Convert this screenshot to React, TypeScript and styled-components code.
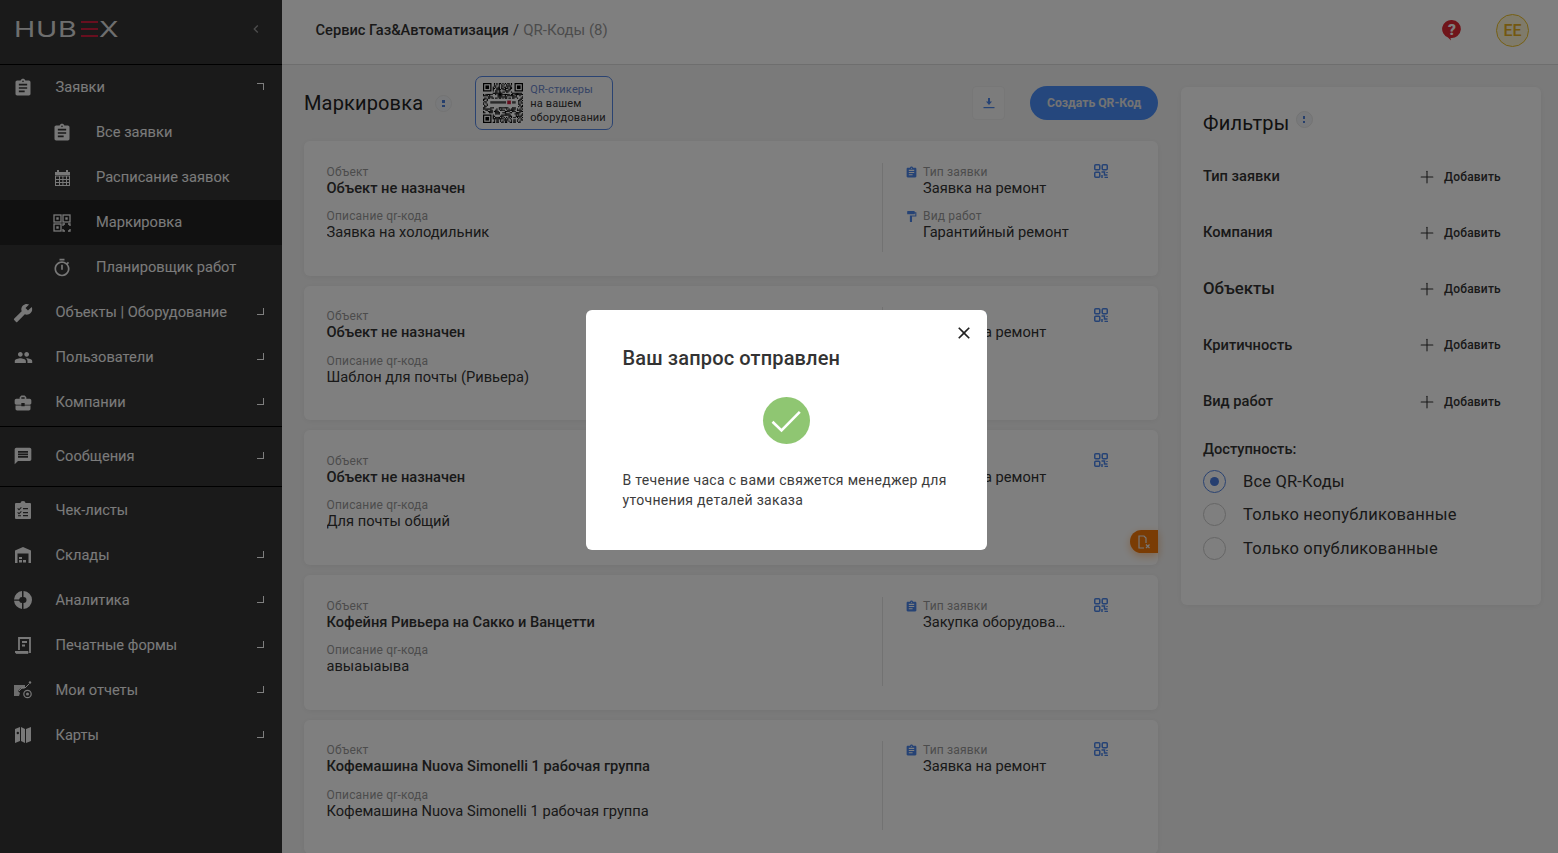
import React from "react";
import styled, { createGlobalStyle } from "styled-components";
import {
  MdAssignment, MdBuild, MdPeople, MdBusinessCenter, MdMessage,
  MdOutlineTimer, MdFormatPaint, MdClose, MdChevronLeft,
} from "react-icons/md";
import { Plus } from "lucide-react";

const Global = createGlobalStyle`
  html, body { margin: 0; padding: 0; height: 100%; overflow: hidden; background: #f4f4f4; }
  #root { height: 100%; }
  * { box-sizing: border-box; }
  body { font-family: Roboto, "Noto Sans", sans-serif; color: #333; }
`;

const Shell = styled.div`display: flex; height: 853px; overflow: hidden; background: #f5f5f5;`;
const Sidebar = styled.aside`width: 282px; flex: none; background: #343434; color: #fff;`;
const LogoBar = styled.div`
  height: 65px; display: flex; align-items: center; justify-content: space-between;
  padding: 0 18px 7px 14px; border-bottom: 1px solid #000;
`;
const Logo = styled.div`
  display: flex; align-items: center; color: #ddd; font-family: Inter, sans-serif;
  font-weight: 400; font-size: 22px; line-height: 20px;
`;
const LogoLetter = styled.span`display: block; width: 22px; transform: scaleX(1.3); transform-origin: left center;`;
const LogoE = styled.span`
  display: block; width: 17px; height: 16px; margin: 0 1px;
  background: repeating-linear-gradient(to bottom, #d11f3f 0 2.4px, transparent 2.4px 6.8px);
`;
const Collapse = styled.span`display: flex; color: #999;`;
const Item = styled.div<{ $sub?: boolean; $active?: boolean; $lift?: boolean }>`
  height: 45px; display: flex; align-items: center;
  padding-left: ${(p) => (p.$sub ? "53px" : "14px")};
  padding-bottom: ${(p) => (p.$lift ? "2px" : "0")};
  background: ${(p) => (p.$active ? "#222" : "transparent")};
  font-size: 14.65px; color: #f6f6f6;
`;
const IconBox = styled.span<{ $sub?: boolean; $lift?: boolean }>`
  width: 18px; height: 18px; flex: none; display: flex; align-items: center; justify-content: center;
  margin-right: ${(p) => (p.$sub ? "25px" : "23.5px")}; margin-top: ${(p) => (p.$lift ? "2px" : "0")}; color: #f0f0f0;
  svg { display: block; flex: none; }
`;
const Corner = styled.span<{ $open?: boolean }>`
  margin-left: auto; margin-right: 18px; width: 7px; height: 7px;
  border-right: 1px solid #fff;
  ${(p) => (p.$open ? "border-top: 1px solid #fff;" : "border-bottom: 1px solid #fff;")}
`;
const Section = styled.div<{ $pad?: boolean }>`
  padding: ${(p) => (p.$pad ? "6px 0 8px" : "0 0 1px")};
  border-bottom: 1px solid #000;
`;

const Main = styled.main`flex: 1; min-width: 0; display: flex; flex-direction: column;`;
const Header = styled.header`
  height: 65px; flex: none; background: #fff; border-bottom: 1px solid #dcdcdc;
  display: flex; align-items: center; padding: 0 29px 4px 33.5px;
`;
const Crumb = styled.div`font-size: 14.65px; font-weight: 500; color: #333;`;
const CrumbSlash = styled.span`font-weight: 400; color: #555; padding: 0 0.5px;`;
const CrumbMuted = styled.span`color: #999; font-weight: 400; font-size: 15px;`;
const HeaderRight = styled.div`margin-left: auto; display: flex; align-items: center; gap: 34px;`;
const Avatar = styled.div`
  width: 33px; height: 33px; border-radius: 50%; border: 1px solid #ecc028; background: #fff6d6;
  color: #e8b01c; font-size: 16px; font-weight: 500; display: flex; align-items: center; justify-content: center;
`;
const Content = styled.div`flex: 1; min-height: 0; display: flex; gap: 23px; padding: 11px 17px 0 22px;`;
const Left = styled.div`width: 854px; flex: none;`;
const TitleRow = styled.div`height: 54px; margin-bottom: 11px; display: flex; align-items: center;`;
const PageTitle = styled.h1`margin: 0; font-size: 20px; font-weight: 400; letter-spacing: 0.15px; color: #222;`;
const Info = styled.span`
  width: 17px; height: 17px; border-radius: 50%; background: #f1f3f7; border: 1px solid #e6e6e6;
  display: flex; align-items: center; justify-content: center; flex: none;
`;
const InfoDots = styled.span`
  width: 2.4px; height: 7px;
  background: linear-gradient(to bottom, #4d7fd8 0 2.5px, transparent 2.5px 4.5px, #4d7fd8 4.5px 7px);
`;
const TitleInfo = styled(Info)`margin-left: 12px;`;
const Promo = styled.div`
  margin-left: 23px; width: 138px; height: 54px; border: 1px solid #5586e4; border-radius: 7px;
  display: flex; align-items: center; padding-left: 7px; gap: 7px; background: #fafafa;
`;
const PromoText = styled.div`font-size: 11px; line-height: 14px; padding-top: 2px; color: #333; letter-spacing: 0.15px; white-space: nowrap;`;
const PromoAccent = styled.div`color: #6c88cc;`;
const Actions = styled.div`margin-left: auto; display: flex; align-items: center; gap: 25px;`;
const Download = styled.button`
  width: 33px; height: 34px; padding: 0; background: #f8f8f8; border: 1px solid #eee; border-radius: 4px;
  display: flex; align-items: center; justify-content: center; color: #4d86ea;
`;
const Create = styled.button`
  width: 128px; height: 34px; border: 0; border-radius: 17px; background: #4a8ffb; color: #e6e6e6;
  font-family: inherit; font-size: 12.2px; font-weight: 700; padding: 0;
`;
const Cards = styled.div`display: flex; flex-direction: column; gap: 10.03px;`;
const Card = styled.article`
  position: relative; height: 134.67px; flex: none; background: #fff; border-radius: 6px;
  box-shadow: 0 1px 6px rgba(0,0,0,.06); padding: 21.8px 50px 0 22.5px; display: flex;
`;
const CardLeft = styled.div`flex: 1; min-width: 0;`;
const CardRight = styled.div`
  width: 226px; height: 89px; flex: none; border-left: 1px solid #e4e4e4; padding-left: 22px;
  display: flex; justify-content: space-between;
`;
const Field = styled.div`height: 44.2px; display: flex; flex-direction: column;`;
const FieldLabel = styled.div`font-size: 12px; line-height: 15px; padding-top: 2px; height: 17px; color: #999; letter-spacing: 0.18px;`;
const FieldStrong = styled.div`font-size: 14.65px; line-height: 16.5px; font-weight: 500; color: #333;`;
const FieldValue = styled.div`font-size: 14.65px; line-height: 17px; color: #333; white-space: nowrap; overflow: hidden; text-overflow: ellipsis;`;
const Meta = styled.div`width: 166px; display: flex; flex-direction: column;`;
const MetaRow = styled.div`height: 44.2px; display: flex;`;
const MetaIcon = styled.span`width: 18px; flex: none; padding-top: 3px; color: #4d86ea; svg { display: block; }`;
const MetaBody = styled.div`width: 147px;`;
const QrBox = styled.span`color: #4d86ea; padding-top: 1px; svg { display: block; }`;
const Tab = styled.div`
  position: absolute; right: 0; top: 100px; width: 28px; height: 23px; background: #f57808;
  border-radius: 12px 0 0 12px; display: flex; align-items: center; justify-content: center;
  box-shadow: 0 3px 8px rgba(250,124,10,.4);
`;
const Filters = styled.section`
  width: 360px; height: 518px; flex: none; margin-top: 11px; background: #fff; border-radius: 6px;
  box-shadow: 0 1px 6px rgba(0,0,0,.06); padding: 22px 40px 0 22px;
`;
const FilterTitleRow = styled.div`height: 28px; margin-bottom: 11px; display: flex;`;
const FilterTitle = styled.h2`margin: 0; font-size: 20px; line-height: 28px; font-weight: 400; letter-spacing: .2px; color: #222;`;
const FilterInfo = styled(Info)`margin: 2px 0 0 6px;`;
const FilterRow = styled.div`height: 56.25px; display: flex; align-items: center; justify-content: space-between;`;
const FilterName = styled.div<{ $large?: boolean }>`
  font-size: ${(p) => (p.$large ? "16.8px" : "14.65px")}; font-weight: 500; color: #333;
  padding-bottom: ${(p) => (p.$large ? "2px" : "0")};
`;
const Add = styled.div`
  width: 80px; display: flex; align-items: center; font-size: 12px; font-weight: 500; color: #333;
  letter-spacing: .2px; gap: 7px; padding-top: 1px;
  svg { margin-left: -4px; flex: none; }
`;
const AvailLabel = styled.div`height: 20px; line-height: 20px; margin: 9.5px 0 5.5px; font-size: 14.65px; font-weight: 500; color: #333;`;
const RadioRow = styled.div`height: 33.5px; display: flex; align-items: center; gap: 17px; font-size: 16.5px; letter-spacing: .18px; color: #333;`;
const Radio = styled.span<{ $on?: boolean }>`
  width: 23px; height: 23px; border-radius: 50%; flex: none; display: flex; align-items: center; justify-content: center;
  border: 1px solid ${(p) => (p.$on ? "#5586e4" : "#ccc")};
  &::after { content: ""; width: 9px; height: 9px; border-radius: 50%; background: ${(p) => (p.$on ? "#4d7fe0" : "transparent")}; }
`;
const Overlay = styled.div`
  position: fixed; inset: 0; background: rgba(0,0,0,.5); display: flex; align-items: center; justify-content: center;
  padding-left: 15px; padding-top: 7px;
`;
const Modal = styled.div`
  position: relative; width: 401px; height: 240px; background: #fff; border-radius: 6px; padding: 36px 36px 0 36.5px;
`;
const ModalClose = styled.span`position: absolute; top: 13px; right: 13px; display: flex; color: #222;`;
const ModalTitle = styled.h3`margin: 0; font-size: 20px; line-height: 25px; font-weight: 500; letter-spacing: .15px; color: #333;`;
const Success = styled.div`
  width: 47px; height: 47px; margin: 26px auto 26px; border-radius: 50%; background: #8fc672;
  position: relative; left: -0.5px; svg { display: block; }
`;
const ModalText = styled.p`margin: 0; font-size: 14px; line-height: 20px; letter-spacing: .31px; color: #3c3c3c;`;

const Qr = ({ size = 18 }: { size?: number }) => (
  <svg width={size} height={size} viewBox="0 0 18 18" fill="none" stroke="currentColor">
    <rect x="1" y="1" width="7" height="7" strokeWidth="1.3" />
    <rect x="10" y="1" width="7" height="7" strokeWidth="1.3" />
    <rect x="1" y="10" width="7" height="7" strokeWidth="1.3" />
    <rect x="3.300" y="3.300" width="2.400" height="2.400" fill="currentColor" stroke="none" />
    <rect x="12.300" y="3.300" width="2.400" height="2.400" fill="currentColor" stroke="none" />
    <rect x="3.300" y="12.300" width="2.400" height="2.400" fill="currentColor" stroke="none" />
    <path d="M10 12v-2h2M15 10h2v2M17 15v2h-2M12 17h-2v-2" strokeWidth="1.300" />
  </svg>
);
const CardQr = () => (
  <svg width="14" height="14" viewBox="0 0 14 14" fill="none" stroke="currentColor" strokeWidth="1.500">
    <rect x=".75" y=".75" width="5" height="5" rx="1" />
    <rect x="8.250" y=".75" width="5" height="5" rx="1" />
    <rect x=".75" y="8.250" width="5" height="5" rx="1" />
    <path d="M7.500 8h3v3h3M8 11v3M10.500 13.500H14M13 8v1" />
  </svg>
);
const DownloadIcon = () => (
  <svg width="14" height="14" viewBox="0 0 14 14" fill="currentColor">
    <path d="M6 2h2v3.500h2L7 9 4 5.500h2z" />
    <rect x="1.500" y="11" width="11" height="1.200" />
  </svg>
);
const Calendar = () => (
  <svg width="17" height="18" viewBox="0 0 17 18" fill="currentColor">
    <path d="M3 1h2v2.500H3zM12 1h2v2.500h-2z" />
    <path d="M1 3h15v3H1z" />
    <path fillRule="evenodd" d="M1 6.600h15V17H1zM2 7.600V10h3V7.600zM6 7.600V10h2.400V7.600zM9.400 7.600V10H12V7.600zM13 7.600V10h2V7.600zM2 11v2h3v-2zM6 11v2h2.400v-2zM9.400 11v2H12v-2zM13 11v2h2v-2zM2 14v2h3v-2zM6 14v2h2.400v-2zM9.400 14v2H12v-2zM13 14v2h2v-2z" />
  </svg>
);
const Checklist = () => (
  <svg width="16" height="18" viewBox="0 0 16 18" fill="currentColor">
    <path fillRule="evenodd" d="M5.500 2a2.500 2 0 0 1 5 0H15a1 1 0 0 1 1 1v14a1 1 0 0 1-1 1H1a1 1 0 0 1-1-1V3a1 1 0 0 1 1-1zM3 7l1 1 2-2 .7.7L4 9.400 2.300 7.700zM8 7h5v1.200H8zM3 11l1 1 2-2 .7.7L4 13.400l-1.700-1.700zM8 11h5v1.200H8zM8 14h5v1.200H8zM3 14.200h3v1H3z" />
  </svg>
);
const Warehouse = () => (
  <svg width="16" height="18" viewBox="0 0 16 18" fill="currentColor">
    <path d="M0 4.500 8 1l8 3.500V17h-2.500V7.500h-11V17H0z" />
    <path d="M4 11h3v2H4zM4 14h3v2.500H4zM8 14h3v2.500H8z" />
  </svg>
);
const Pie = () => (
  <svg width="18" height="18" viewBox="0 0 18 18" fill="currentColor">
    <path d="M8 .1V6a3 3 0 0 0-2.900 2.400H0A9 9 0 0 1 8 .1zM0 9.800h5.100A3 3 0 0 0 8 12v5.900A9 9 0 0 1 0 9.800zM9.500.1A9 9 0 0 1 18 9a9 9 0 0 1-8.500 8.900V12a3 3 0 0 0 0-6z" />
  </svg>
);
const PrintForm = () => (
  <svg width="17" height="18" viewBox="0 0 17 18" fill="none" stroke="currentColor" strokeWidth="1.800">
    <path d="M4 14V2h11v15" />
    <path d="M7 6h5M7 9.500h3" />
    <path d="M0 15.500h13v1.800H1z" fill="currentColor" strokeWidth="1" />
  </svg>
);
const Reports = () => (
  <svg width="18" height="18" viewBox="0 0 18 18" fill="currentColor">
    <path d="M0 4h11v3l-2 1-2-1-3 3 2 2-1 3H0z" opacity=".9" />
    <path d="M5 10l4-4 2 1 4-4" fill="none" stroke="currentColor" strokeWidth="1" />
    <circle cx="16" cy="1.500" r="1.200" />
    <circle cx="13.500" cy="13" r="3.700" fill="none" stroke="currentColor" strokeWidth="1.200" />
    <circle cx="13.500" cy="13" r="1.500" />
  </svg>
);
const MapIcon = () => (
  <svg width="16" height="18" viewBox="0 0 16 18" fill="currentColor">
    <path fillRule="evenodd" d="M0 3l5-2v14l-5 2zM1.600 7a1.200 1.200 0 1 0 2.400 0 1.200 1.200 0 0 0-2.400 0z" />
    <path d="M6 1l4 2v14l-4-2zM11 3l5-2v14l-5 2z" />
  </svg>
);
const Help = () => (
  <svg width="20" height="22" viewBox="0 0 20 22">
    <path d="M10 1a9 9 0 1 1-1.500 17.900L9 21.500 6 18.400A9 9 0 0 1 10 1z" fill="#e02a35" />
    <text x="10" y="15.500" textAnchor="middle" fontSize="15.500" fontWeight="900" fontFamily="Roboto, sans-serif" fill="#fff">?</text>
  </svg>
);
const TabIcon = () => (
  <svg width="14" height="14" viewBox="0 0 14 14" fill="none" stroke="#eee" strokeWidth="1.200">
    <path d="M7 13H2V1h5l2 2v5" />
    <path d="M9 9.500l3.500 3.500M12.500 9.500 9 13" />
  </svg>
);
const CheckMark = () => (
  <svg width="47" height="47" viewBox="-23.500 -23.500 47 47" fill="none" stroke="#fff" strokeWidth="2.600">
    <path d="M-14 1.300-5 10 13.300-8.700" />
  </svg>
);

const MODULES = 33;
const inFinder = (x: number, y: number) =>
  (x < 8 && y < 8) || (x >= MODULES - 8 && y < 8) || (x < 8 && y >= MODULES - 8);
const inPatch = (x: number, y: number) => x >= 4 && x <= 28 && y >= 13 && y <= 19;
const cell = (x: number, y: number) => ((x * 73 + y * 151 + x * y * 17 + (x ^ y) * 29) % 7) < 4;
const Finder = ({ x, y }: { x: number; y: number }) => (
  <>
    <rect x={x + 0.5} y={y + 0.5} width="6" height="6" fill="none" stroke="#000" />
    <rect x={x + 2} y={y + 2} width="3" height="3" fill="#000" />
  </>
);
const PromoQr = () => (
  <svg width="40" height="40" viewBox="0 0 33 33">
    <rect width="33" height="33" fill="#fff" />
    {Array.from({ length: MODULES * MODULES }, (_, i) => {
      const x = i % MODULES;
      const y = Math.floor(i / MODULES);
      if (inFinder(x, y) || inPatch(x, y) || !cell(x, y)) return null;
      return <rect key={i} x={x} y={y} width="1" height="1" fill="#000" />;
    })}
    <Finder x={0} y={0} />
    <Finder x={26} y={0} />
    <Finder x={0} y={26} />
    <rect x="6" y="15" width="13" height="2" fill="#555" />
    <rect x="20" y="14.500" width="3" height="3" fill="#d11f3f" />
    <rect x="24" y="15" width="3" height="2" fill="#555" />
  </svg>
);

const menuA = [
  { label: "Заявки", icon: <MdAssignment size={20} />, open: true },
  { label: "Все заявки", icon: <MdAssignment size={20} />, sub: true },
  { label: "Расписание заявок", icon: <Calendar />, sub: true },
  { label: "Маркировка", icon: <Qr />, sub: true, active: true },
  { label: "Планировщик работ", icon: <MdOutlineTimer size={20} />, sub: true },
  { label: "Объекты | Оборудование", icon: <MdBuild size={20} style={{ transform: "scaleX(-1)" }} />, arrow: true },
  { label: "Пользователи", icon: <MdPeople size={19} />, arrow: true },
  { label: "Компании", icon: <MdBusinessCenter size={20} />, arrow: true },
];
const menuB = [{ label: "Сообщения", icon: <MdMessage size={20} />, arrow: true }];
const menuC = [
  { label: "Чек-листы", icon: <Checklist /> },
  { label: "Склады", icon: <Warehouse />, arrow: true },
  { label: "Аналитика", icon: <Pie />, arrow: true },
  { label: "Печатные формы", icon: <PrintForm />, arrow: true },
  { label: "Мои отчеты", icon: <Reports />, arrow: true },
  { label: "Карты", icon: <MapIcon />, arrow: true },
];

type M = { label: string; icon: React.ReactNode; sub?: boolean; active?: boolean; arrow?: boolean; open?: boolean };
const MenuItem = ({ m, lift }: { m: M; lift?: boolean }) => (
  <Item $sub={m.sub} $active={m.active} $lift={lift}>
    <IconBox $sub={m.sub} $lift={lift}>{m.icon}</IconBox>
    {m.label}
    {(m.arrow || m.open) && <Corner $open={m.open} />}
  </Item>
);

const cards = [
  { obj: "Объект не назначен", desc: "Заявка на холодильник", type: "Заявка на ремонт", work: "Гарантийный ремонт" },
  { obj: "Объект не назначен", desc: "Шаблон для почты (Ривьера)", type: "Заявка на ремонт" },
  { obj: "Объект не назначен", desc: "Для почты общий", type: "Заявка на ремонт", tab: true },
  { obj: "Кофейня Ривьера на Сакко и Ванцетти", desc: "авыаыаыва", type: "Закупка оборудования" },
  { obj: "Кофемашина Nuova Simonelli 1 рабочая группа", desc: "Кофемашина Nuova Simonelli 1 рабочая группа", type: "Заявка на ремонт" },
];
const filters = ["Тип заявки", "Компания", "Объекты", "Критичность", "Вид работ"];
const radios = ["Все QR-Коды", "Только неопубликованные", "Только опубликованные"];

export default function App() {
  return (
    <Shell>
      <Global />
      <Sidebar>
        <LogoBar>
          <Logo>
            <LogoLetter>H</LogoLetter>
            <LogoLetter>U</LogoLetter>
            <LogoLetter>B</LogoLetter>
            <LogoE />
            <LogoLetter>X</LogoLetter>
          </Logo>
          <Collapse><MdChevronLeft size={16} /></Collapse>
        </LogoBar>
        <Section>{menuA.map((m) => <MenuItem key={m.label} m={m} lift />)}</Section>
        <Section $pad>{menuB.map((m) => <MenuItem key={m.label} m={m} />)}</Section>
        <div>{menuC.map((m) => <MenuItem key={m.label} m={m} />)}</div>
      </Sidebar>
      <Main>
        <Header>
          <Crumb>Сервис Газ&amp;Автоматизация <CrumbSlash>/</CrumbSlash> <CrumbMuted>QR-Коды (8)</CrumbMuted></Crumb>
          <HeaderRight>
            <Help />
            <Avatar>EE</Avatar>
          </HeaderRight>
        </Header>
        <Content>
          <Left>
            <TitleRow>
              <PageTitle>Маркировка</PageTitle>
              <TitleInfo><InfoDots /></TitleInfo>
              <Promo>
                <PromoQr />
                <PromoText>
                  <PromoAccent>QR-стикеры</PromoAccent>
                  на вашем<br />оборудовании
                </PromoText>
              </Promo>
              <Actions>
                <Download><DownloadIcon /></Download>
                <Create>Создать QR-Код</Create>
              </Actions>
            </TitleRow>
            <Cards>
              {cards.map((c, i) => (
                <Card key={i}>
                  <CardLeft>
                    <Field>
                      <FieldLabel>Объект</FieldLabel>
                      <FieldStrong>{c.obj}</FieldStrong>
                    </Field>
                    <Field>
                      <FieldLabel>Описание qr-кода</FieldLabel>
                      <FieldValue>{c.desc}</FieldValue>
                    </Field>
                  </CardLeft>
                  <CardRight>
                    <Meta>
                      <MetaRow>
                        <MetaIcon><MdAssignment size={13} /></MetaIcon>
                        <MetaBody>
                          <FieldLabel>Тип заявки</FieldLabel>
                          <FieldValue>{c.type}</FieldValue>
                        </MetaBody>
                      </MetaRow>
                      {c.work && (
                        <MetaRow>
                          <MetaIcon><MdFormatPaint size={13} /></MetaIcon>
                          <MetaBody>
                            <FieldLabel>Вид работ</FieldLabel>
                            <FieldValue>{c.work}</FieldValue>
                          </MetaBody>
                        </MetaRow>
                      )}
                    </Meta>
                    <QrBox><CardQr /></QrBox>
                  </CardRight>
                  {c.tab && <Tab><TabIcon /></Tab>}
                </Card>
              ))}
            </Cards>
          </Left>
          <Filters>
            <FilterTitleRow>
              <FilterTitle>Фильтры</FilterTitle>
              <FilterInfo><InfoDots /></FilterInfo>
            </FilterTitleRow>
            {filters.map((f) => (
              <FilterRow key={f}>
                <FilterName $large={f === "Объекты"}>{f}</FilterName>
                <Add><Plus size={20} strokeWidth={1.3} />Добавить</Add>
              </FilterRow>
            ))}
            <AvailLabel>Доступность:</AvailLabel>
            {radios.map((r, i) => (
              <RadioRow key={r}><Radio $on={i === 0} />{r}</RadioRow>
            ))}
          </Filters>
        </Content>
      </Main>
      <Overlay>
        <Modal>
          <ModalClose><MdClose size={20} /></ModalClose>
          <ModalTitle>Ваш запрос отправлен</ModalTitle>
          <Success><CheckMark /></Success>
          <ModalText>В течение часа с вами свяжется менеджер для уточнения деталей заказа</ModalText>
        </Modal>
      </Overlay>
    </Shell>
  );
}
